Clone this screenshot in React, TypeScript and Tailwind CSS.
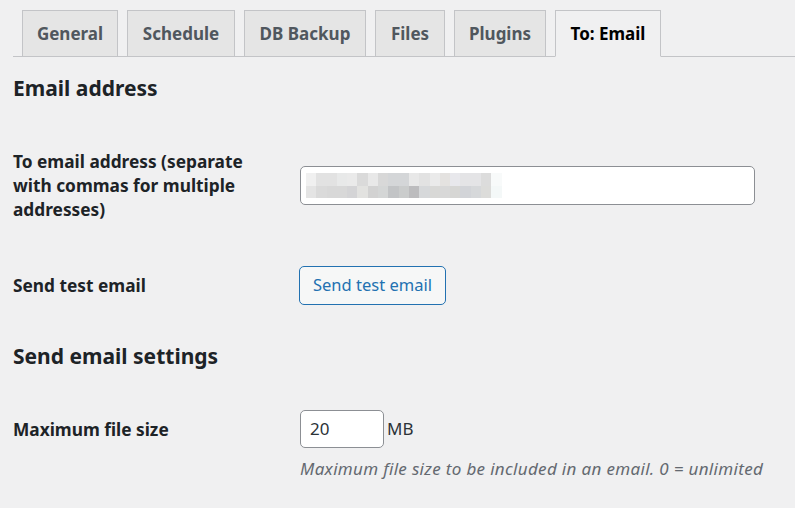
import React from "react";

const tabs = [
  { label: "General", w: "w-[96px]" },
  { label: "Schedule", w: "w-[108px]" },
  { label: "DB Backup", w: "w-[122px]" },
  { label: "Files", w: "w-[70px]" },
  { label: "Plugins", w: "w-[92px]" },
];

const topRow = [
  "bg-[#f0f0f0]", "bg-[#e2e2e2]", "bg-[#e2e2e2]", "bg-[#e8e9e9]", "bg-[#eaeaea]",
  "bg-[#dadada]", "bg-[#e8e8e8]", "bg-[#d8d8d8]", "bg-[#d4d6d8]", "bg-[#d4d6d8]",
  "bg-[#e8e8e8]", "bg-[#e2e2e2]", "bg-[#eaeaea]", "bg-[#e4e2e0]", "bg-[#e8e8ec]",
  "bg-[#e4e4e6]", "bg-[#e4e4e6]", "bg-[#dcdcdc]", "bg-[#f8fafa]",
];
const bottomRow = [
  "bg-[#e4e4e4]", "bg-[#dadada]", "bg-[#d8d8d8]", "bg-[#d8d8d8]", "bg-[#d4d4d6]",
  "bg-[#e2e2e0]", "bg-[#d2d2d2]", "bg-[#d4d6d6]", "bg-[#c2c4c6]", "bg-[#cacccc]",
  "bg-[#bcbcbe]", "bg-[#d6d8da]", "bg-[#d8d8d6]", "bg-[#d8d8d8]", "bg-[#d6d6d4]",
  "bg-[#d2d4d8]", "bg-[#d6d8da]", "bg-[#dcdcda]", "bg-[#f4f8f8]",
];

export default function App() {
  return (
    <div
      className="w-full h-[508px] overflow-hidden bg-[#f0f0f1] text-[#1d2327]"
      style={{ fontFamily: '"Noto Sans", "Open Sans", sans-serif' }}
    >
      {/* Tabs */}
      <div className="ml-[13px] pt-[10px] flex border-b border-[#c3c4c7]">
        {tabs.map((t) => (
          <div
            key={t.label}
            className={`${t.w} ml-[9px] -mb-px h-[47px] flex items-center justify-center border border-[#c3c4c7] bg-[#e5e5e5] text-[#50575e] text-[17px] font-bold`}
          >
            {t.label}
          </div>
        ))}
        <div className="w-[106px] ml-[9px] -mb-px h-[47px] flex items-center justify-center border border-[#c3c4c7] border-b-[#f0f0f1] bg-[#f0f0f1] text-black text-[17px] font-bold">
          To: Email
        </div>
      </div>

      <div className="pl-[13px] pr-[13px]">
        <h2 className="mt-[17px] text-[21px] leading-[28px] font-bold">Email address</h2>

        {/* Row: to email address */}
        <div className="flex items-start mt-[48px]">
          <div className="w-[287px] shrink-0">
            <div className="w-[240px] text-[17.3px] leading-[24px] font-bold">
              To email address (separate with commas for multiple addresses)
            </div>
          </div>
          <div className="mt-[16px] w-[455px] h-[39px] rounded-[5px] border border-[#8c8f94] bg-white flex items-center pl-[5px]">
            <div className="flex flex-col">
              <div className="flex">
                {topRow.map((c, i) => (
                  <div key={i} className={`${c} w-[10.3px] h-[12.7px]`} />
                ))}
              </div>
              <div className="flex">
                {bottomRow.map((c, i) => (
                  <div key={i} className={`${c} w-[10.3px] h-[12.7px]`} />
                ))}
              </div>
            </div>
          </div>
        </div>

        {/* Row: send test email */}
        <div className="flex items-center mt-[44px]">
          <div className="w-[286px] shrink-0 text-[17.3px] font-bold">Send test email</div>
          <button className="h-[39px] px-[13px] rounded-[5px] border border-[#2271b1] bg-[#f6f7f7] text-[#2271b1] text-[16.5px]">
            Send test email
          </button>
        </div>

        <h2 className="mt-[37px] text-[21px] leading-[28px] font-bold">Send email settings</h2>

        {/* Row: maximum file size */}
        <div className="flex items-start mt-[40px]">
          <div className="w-[287px] shrink-0 pt-[8px] text-[17.3px] leading-[24px] font-bold">
            Maximum file size
          </div>
          <div className="flex flex-col">
            <div className="flex items-center">
              <div className="w-[84px] h-[38px] rounded-[5px] border border-[#8c8f94] bg-white flex items-center pl-[9px] text-[17px] text-[#2c3338]">
                20
              </div>
              <span className="ml-[3px] text-[17px] text-[#2c3338]">MB</span>
            </div>
            <p className="mt-[8px] text-[17px] tracking-[0.33px] italic text-[#646970]">
              Maximum file size to be included in an email. 0 = unlimited
            </p>
          </div>
        </div>
      </div>
    </div>
  );
}
